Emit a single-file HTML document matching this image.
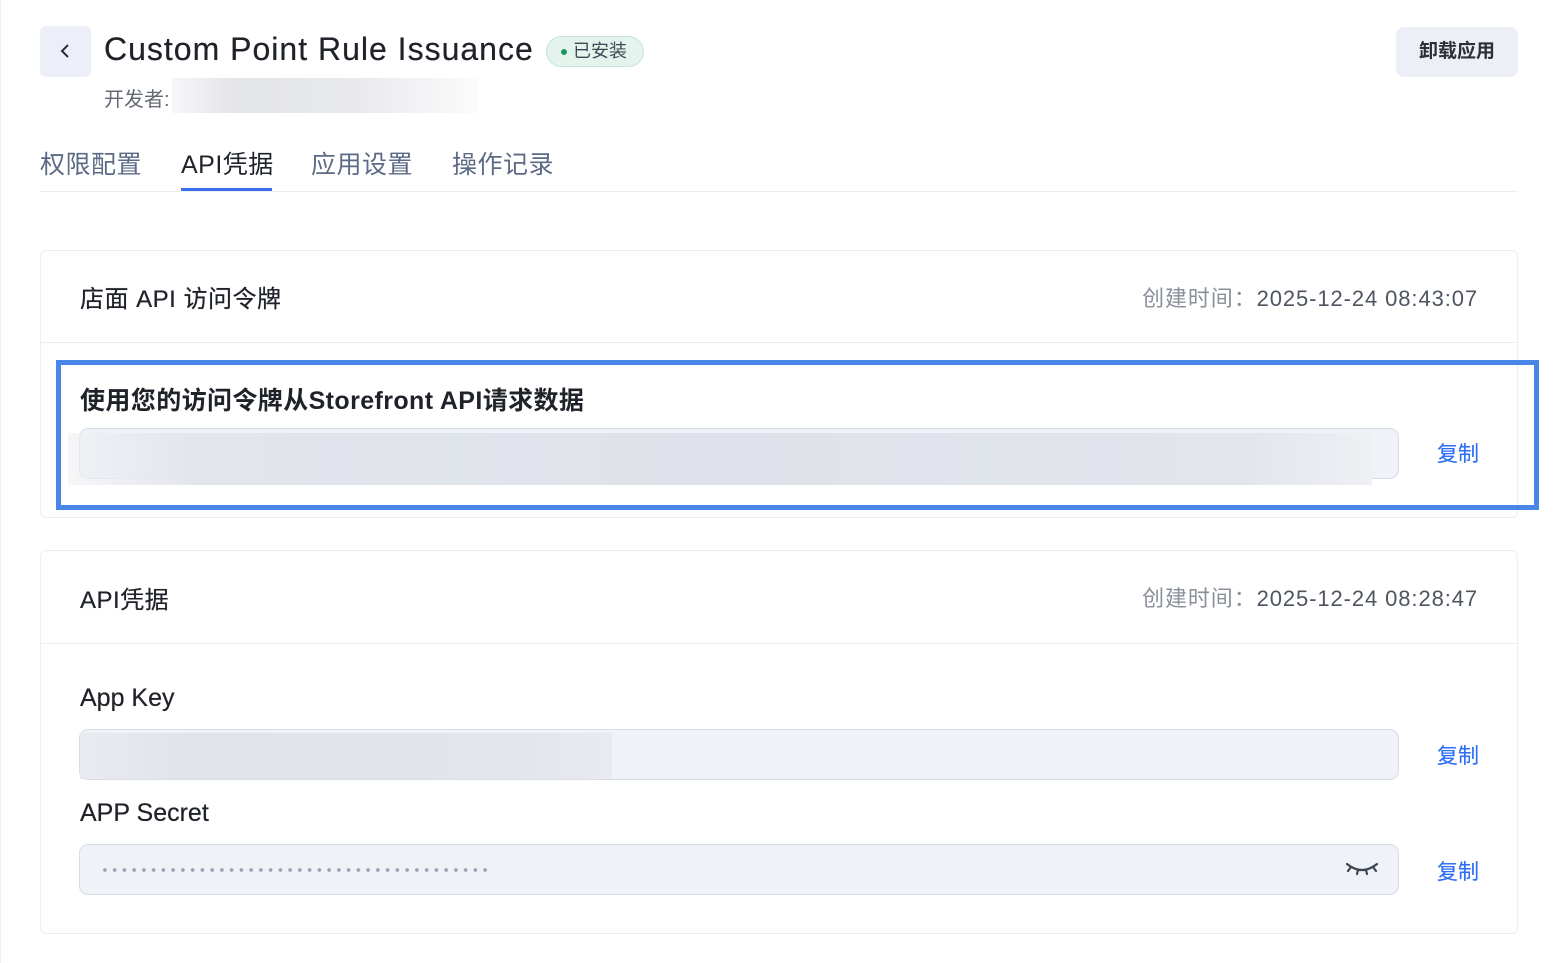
<!DOCTYPE html>
<html><head><meta charset="utf-8"><style>
*{margin:0;padding:0;box-sizing:border-box}
body{width:1564px;height:963px;background:#fff;font-family:"Liberation Sans","Noto Sans CJK SC",sans-serif;color:#1f2329;position:relative;overflow:hidden}
.a{position:absolute}
.back{left:40px;top:26px;width:51px;height:51px;background:#eceff8;border-radius:6px}
.title{left:104px;top:31px;font-size:32px;letter-spacing:1px;color:#1f2329;white-space:nowrap;text-shadow:0 0 0.4px #1f2329}
.badge{left:546px;top:36px;width:98px;height:31px;border:1px solid #c6e6d6;background:#e4f4ec;border-radius:16px;font-size:18px;color:#3d4a55;line-height:29px;padding-left:26px}
.badge:before{content:"";position:absolute;left:14px;top:12px;width:6px;height:6px;border-radius:3px;background:#1a9a5a}
.dev{left:104px;top:83px;font-size:20px;color:#646a73}
.blur{background:linear-gradient(90deg,rgba(225,227,232,0.3),#e4e5e9 20%,#e8e9ec 60%,rgba(235,236,240,0.2))}
.uninst{left:1396px;top:27px;width:122px;height:50px;background:#eceff5;border-radius:8px;font-size:19px;line-height:50px;text-align:center;font-weight:bold;color:#2b2f36}
.tab{top:145px;font-size:25px;color:#5d6a85;letter-spacing:0.5px}
.card{left:40px;width:1478px;border:1px solid #eceef2;border-radius:6px}
.hd{font-size:24px;color:#1f2329;letter-spacing:0.5px;text-shadow:0 0 0.5px #1f2329}
.time{font-size:22px;color:#4e5560;white-space:nowrap;letter-spacing:0.9px}
.time span{color:#8a9099}
.inp{left:79px;width:1320px;height:51px;background:#eff2f7;border:1px solid #d9dde6;border-radius:9px}
.copy{font-size:21px;color:#2f6ff5;text-shadow:0 0 0.4px #2f6ff5}
.lbl{font-size:25px;color:#1f2329;text-shadow:0 0 0.5px #1f2329}
</style></head><body>
<div class="a" style="left:0;top:0;width:1px;height:963px;background:#eee"></div>
<div class="a back"><svg width="51" height="51"><path d="M28 19l-6 6 6 6" stroke="#2b2f36" stroke-width="2" fill="none"/></svg></div>
<div class="a title">Custom Point Rule Issuance</div>
<div class="a badge">已安装</div>
<div class="a dev">开发者:</div>
<div class="a blur" style="left:172px;top:78px;width:305px;height:35px"></div>
<div class="a uninst">卸载应用</div>
<div class="a tab" style="left:40px">权限配置</div>
<div class="a tab" style="left:181px;color:#1f2329">API凭据</div>
<div class="a tab" style="left:311px">应用设置</div>
<div class="a tab" style="left:452px">操作记录</div>
<div class="a" style="left:40px;top:191px;width:1478px;height:1px;background:#eceef2"></div>
<div class="a" style="left:181px;top:188px;width:91px;height:3px;background:#3a6ff0"></div>

<div class="a card" style="top:250px;height:268px"></div>
<div class="a" style="left:41px;top:342px;width:1476px;height:1px;background:#eceef2"></div>
<div class="a hd" style="left:80px;top:279px">店面 API 访问令牌</div>
<div class="a time" style="right:86px;top:281px"><span>创建时间：</span>2025-12-24 08:43:07</div>
<div class="a lbl" style="left:80px;top:381px;font-weight:bold;letter-spacing:0.4px;text-shadow:none">使用您的访问令牌从Storefront API请求数据</div>
<div class="a inp" style="top:428px"></div>
<div class="a blur" style="left:68px;top:433px;width:1304px;height:52px;background:linear-gradient(90deg,rgba(240,241,245,.6),#e2e5ec 10%,#dfe2ea 50%,#e2e5ec 90%,#eef0f4)"></div>
<div class="a copy" style="left:1437px;top:438px">复制</div>
<div class="a" style="left:56px;top:360px;width:1483px;height:150px;border:5px solid #4a86e8"></div>

<div class="a card" style="top:550px;height:384px"></div>
<div class="a" style="left:41px;top:643px;width:1476px;height:1px;background:#eceef2"></div>
<div class="a hd" style="left:80px;top:580px">API凭据</div>
<div class="a time" style="right:86px;top:581px"><span>创建时间：</span>2025-12-24 08:28:47</div>
<div class="a lbl" style="left:80px;top:684px">App Key</div>
<div class="a inp" style="top:729px"></div>
<div class="a" style="left:80px;top:733px;width:532px;height:46px;background:linear-gradient(90deg,#e9ebf0,#e0e3ea 20%,#e2e5ec 80%,#e8eaef)"></div>
<div class="a copy" style="left:1437px;top:740px">复制</div>
<div class="a lbl" style="left:80px;top:799px">APP Secret</div>
<div class="a inp" style="top:844px"></div>
<div class="a" style="left:100px;top:867px;width:390px;height:6px;background:radial-gradient(circle,#9aa0b4 1.6px,transparent 2.1px) 0 0/9.75px 6px repeat-x"></div>
<svg class="a" style="left:1344px;top:858px" width="36" height="22"><path d="M3 6q15 12 30 0M7 9l-3 4M14 12l-1 4M22 12l1 4M29 9l3 4" stroke="#3d4450" stroke-width="2.2" fill="none" stroke-linecap="round"/></svg>
<div class="a copy" style="left:1437px;top:856px">复制</div>
</body></html>
